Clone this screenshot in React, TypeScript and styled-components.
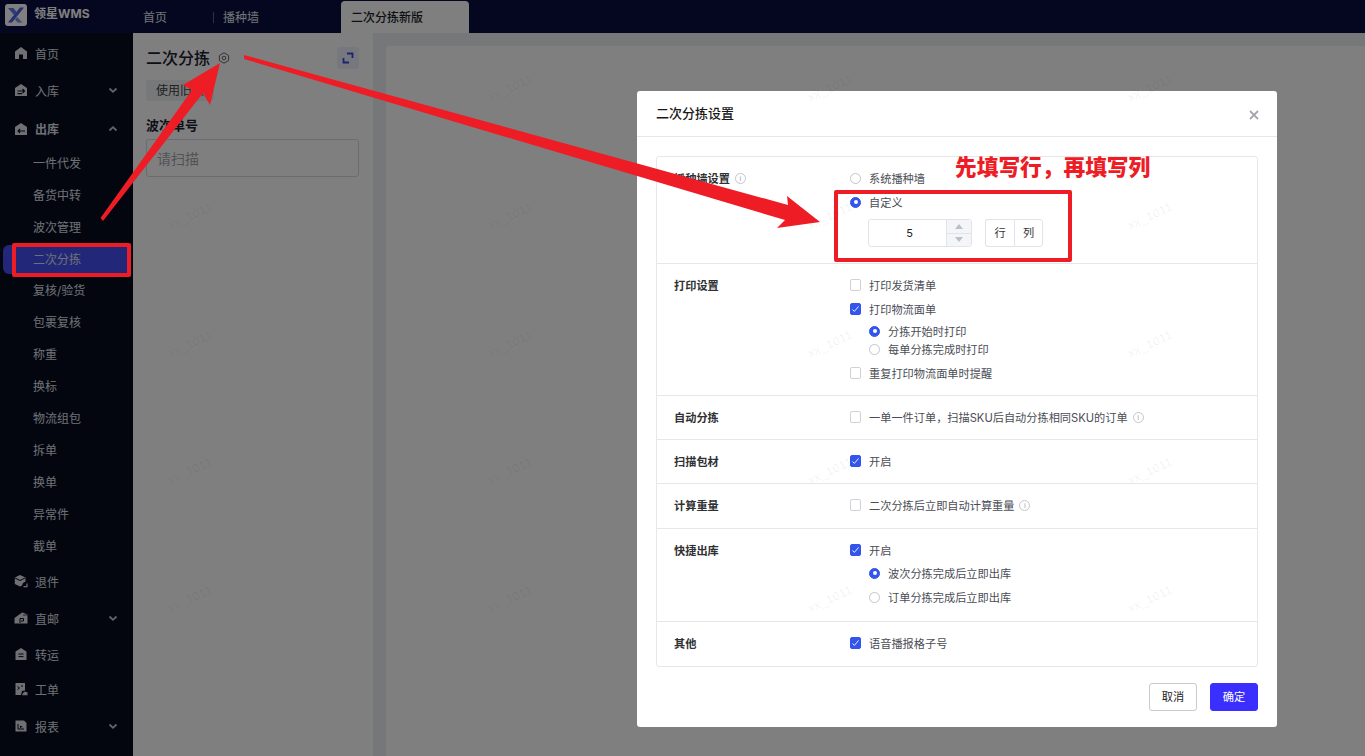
import React from "react";
import styled, { createGlobalStyle } from "styled-components";

const Global = createGlobalStyle`
  html, body { margin: 0; padding: 0; width: 1365px; height: 756px; overflow: hidden; background: #fff; }
  * { box-sizing: border-box; }
  body { font-family: Inter, "Noto Sans CJK SC", "Liberation Sans", sans-serif; font-size: 12px; color: #222; }
`;

const Page = styled.div`
  position: relative;
  width: 1365px;
  height: 756px;
  overflow: hidden;
  display: flex;
  flex-direction: column;
  background: #eceef1;
`;
const Header = styled.header`
  height: 33px;
  flex: none;
  background: #080f3e;
  display: flex;
  align-items: stretch;
`;
const Brand = styled.div`
  width: 133px;
  padding: 4px 0 0 5px;
  display: flex;
  gap: 7px;
  align-items: flex-start;
  color: #fff;
  font-weight: 700;
  font-size: 12px;
  line-height: 19px;
  svg { display: block; flex: none; }
`;
const Tab = styled.div<{ $w: number; $active?: boolean; $sep?: boolean }>`
  position: relative;
  width: ${(p) => p.$w}px;
  margin-top: 1px;
  padding-left: 10px;
  line-height: 33px;
  font-size: 12px;
  font-weight: ${(p) => (p.$active ? 500 : 400)};
  color: ${(p) => (p.$active ? "#1c1f2b" : "#e6e8f0")};
  background: ${(p) => (p.$active ? "#fff" : "transparent")};
  border-radius: ${(p) => (p.$active ? "4px 4px 0 0" : "0")};
  ${(p) =>
    p.$sep &&
    `&::before { content: ""; position: absolute; left: 0; top: 11px; height: 11px; width: 1px; background: #5a6080; }`}
`;
const Body = styled.div`
  flex: 1;
  display: flex;
  min-height: 0;
`;
const Sidebar = styled.nav`
  width: 133px;
  flex: none;
  background: #060a1e;
  padding-top: 2px;
`;
const TopItem = styled.div<{ $h: number; $on?: boolean }>`
  height: ${(p) => p.$h}px;
  padding: 0 15px 0 14px;
  display: flex;
  align-items: center;
  gap: 7px;
  color: #dfe1e8;
  font-weight: ${(p) => (p.$on ? 700 : 400)};
  svg { flex: none; }
`;
const ItemLabel = styled.span`
  flex: 1;
`;
const SubItem = styled.div<{ $active?: boolean }>`
  margin: ${(p) => (p.$active ? "1px 6px 1px 3px" : "0 6px 0 3px")};
  height: ${(p) => (p.$active ? 29 : 32)}px;
  padding-left: 30px;
  line-height: ${(p) => (p.$active ? 30 : 32)}px;
  color: #dfe1e8;
  background: ${(p) => (p.$active ? "#444ef4" : "transparent")};
  border-radius: ${(p) => (p.$active ? "6px 0 0 6px" : "0")};
`;
const LeftPanel = styled.section`
  width: 240px;
  flex: none;
  background: #fff;
  padding: 14px 14px 0 13px;
`;
const TitleRow = styled.div`
  height: 22px;
  display: flex;
  align-items: center;
  gap: 8px;
  svg { display: block; }
`;
const PanelTitle = styled.h2`
  margin: 0;
  font-size: 16px;
  font-weight: 500;
  color: #1d2030;
  line-height: 22px;
`;
const ExpandButton = styled.div`
  width: 22px;
  height: 22px;
  margin-left: auto;
  border-radius: 3px;
  background: #eef0fb;
  display: flex;
  align-items: center;
  justify-content: center;
`;
const OldTag = styled.div`
  margin-top: 11px;
  width: 68px;
  height: 21px;
  border-radius: 3px;
  background: #eef0f4;
  font-size: 12px;
  line-height: 21px;
  padding-left: 10px;
  color: #444;
  overflow: hidden;
  white-space: nowrap;
`;
const FieldLabel = styled.div`
  margin-top: 15px;
  font-size: 13px;
  font-weight: 700;
  line-height: 18px;
  color: #1d2030;
`;
const ScanInput = styled.div`
  margin-top: 5px;
  height: 38px;
  border: 1px solid #d6d9de;
  border-radius: 3px;
  padding-left: 10px;
  line-height: 38px;
  font-size: 14px;
  color: #a4a7ad;
`;
const RightArea = styled.main`
  flex: 1;
  padding: 13px 0 0 13px;
`;
const RightPanel = styled.div`
  height: 100%;
  background: #fff;
  border-radius: 3px 0 0 0;
`;
const Scrim = styled.div`
  position: absolute;
  inset: 0;
  background: rgba(0, 0, 0, 0.5);
  padding: 91px 0 0 637px;
`;
const Modal = styled.div`
  width: 640px;
  height: 636px;
  background: #fff;
  border-radius: 3px;
  display: flex;
  flex-direction: column;
`;
const ModalHead = styled.div`
  height: 46px;
  flex: none;
  border-bottom: 1px solid #e6e7ea;
  padding: 0 18px 3px 19px;
  display: flex;
  align-items: center;
  justify-content: space-between;
`;
const ModalTitle = styled.h3`
  margin: 0;
  font-size: 13px;
  font-weight: 500;
  color: #1a1a1a;
`;
const CloseIcon = styled.svg`
  margin-top: 5px;
`;
const ModalBody = styled.div`
  padding: 19px 19px 0;
`;
const Card = styled.div`
  border: 1px solid #e6e7ea;
  border-radius: 3px;
`;
const Row = styled.div<{ $pb: number }>`
  display: flex;
  padding: 12px 0 ${(p) => p.$pb}px;
  border-bottom: 1px solid #e6e7ea;
  &:last-child { border-bottom: 0; }
`;
const RowLabel = styled.div`
  width: 193px;
  padding-left: 17px;
  flex: none;
  font-weight: 700;
  font-size: 11.2px;
  line-height: 20px;
  color: #303133;
  display: flex;
  align-items: flex-start;
  height: 18px;
`;
const RowBody = styled.div`
  display: flex;
  flex-direction: column;
`;
const Option = styled.div<{ $mt?: number; $indent?: boolean }>`
  display: flex;
  align-items: flex-start;
  height: 18px;
  margin-top: ${(p) => p.$mt ?? 0}px;
  margin-left: ${(p) => (p.$indent ? 19 : 0)}px;
  font-size: 11.2px;
  line-height: 20px;
  color: #4a4d55;
  white-space: nowrap;
`;
const Box = styled.span<{ $on?: boolean }>`
  width: 11px;
  height: 12px;
  flex: none;
  align-self: center;
  margin-right: 8px;
  border-radius: 2px;
  border: 1px solid ${(p) => (p.$on ? "#3355ee" : "#cfd1d6")};
  background: ${(p) => (p.$on ? "#3355ee" : "#fff")};
  display: flex;
  align-items: center;
  justify-content: center;
`;
const Radio = styled.span<{ $on?: boolean }>`
  width: 11px;
  height: 11px;
  flex: none;
  align-self: center;
  margin-right: 8px;
  border-radius: 50%;
  border: 1px solid ${(p) => (p.$on ? "#3355ee" : "#c4c6cc")};
  background: ${(p) => (p.$on ? "#3355ee" : "#fff")};
  display: flex;
  align-items: center;
  justify-content: center;
  &::after {
    content: "";
    width: 4px;
    height: 4px;
    border-radius: 50%;
    background: ${(p) => (p.$on ? "#fff" : "transparent")};
  }
`;
const InfoMark = styled.span`
  width: 11px;
  height: 11px;
  margin-left: 5px;
  flex: none;
  align-self: center;
  border: 1px solid #c4c6cc;
  border-radius: 50%;
  color: #a8abb2;
  font-size: 8px;
  font-weight: 400;
  line-height: 9px;
  text-align: center;
  font-family: "Liberation Sans", sans-serif;
`;
const SizeLine = styled.div`
  margin: 8px 0 0 18px;
  display: flex;
  gap: 13px;
`;
const NumberField = styled.div`
  width: 104px;
  height: 28px;
  border: 1px solid #e2e4e8;
  border-radius: 3px;
  display: flex;
  overflow: hidden;
`;
const NumberValue = styled.div`
  flex: 1;
  padding-left: 4px;
  text-align: center;
  line-height: 26px;
  font-size: 11px;
  color: #222;
`;
const Stepper = styled.div`
  width: 25px;
  border-left: 1px solid #e2e4e8;
  background: #f4f5f8;
  display: flex;
  flex-direction: column;
`;
const Step = styled.div<{ $down?: boolean }>`
  flex: 1;
  display: flex;
  align-items: center;
  justify-content: center;
  border-top: ${(p) => (p.$down ? "1px solid #e2e4e8" : "0")};
  &::after {
    content: "";
    border-left: 4px solid transparent;
    border-right: 4px solid transparent;
    ${(p) => (p.$down ? "border-top: 5px solid #bcbfc6;" : "border-bottom: 5px solid #bcbfc6;")}
  }
`;
const UnitGroup = styled.div`
  display: flex;
`;
const Unit = styled.div`
  width: 29px;
  height: 28px;
  border: 1px solid #e2e4e8;
  line-height: 26px;
  text-align: center;
  font-size: 11.2px;
  color: #333;
  &:first-child { border-radius: 3px 0 0 3px; border-right: 0; }
  &:last-child { border-radius: 0 3px 3px 0; }
`;
const Footer = styled.div`
  margin-top: 16px;
  padding-right: 19px;
  display: flex;
  justify-content: flex-end;
  gap: 13px;
`;
const Button = styled.div<{ $primary?: boolean }>`
  width: 48px;
  height: 28px;
  border-radius: 3px;
  font-size: 11.2px;
  line-height: 26px;
  text-align: center;
  border: 1px solid ${(p) => (p.$primary ? "#3a2fff" : "#c8cad0")};
  background: ${(p) => (p.$primary ? "#3a2fff" : "#fff")};
  color: ${(p) => (p.$primary ? "#fff" : "#222")};
`;
const WatermarkLayer = styled.div`
  position: absolute;
  left: 30px;
  top: 24px;
  display: grid;
  grid-template-columns: repeat(4, 320px);
  grid-auto-rows: 127.8px;
  pointer-events: none;
`;
const Watermark = styled.span`
  display: flex;
  align-items: center;
  justify-content: center;
  font-family: "Liberation Sans", sans-serif;
  font-size: 12px;
  letter-spacing: 0.4px;
  color: rgba(0, 0, 0, 0.07);
  transform: rotate(-25deg);
`;
const Annotations = styled.svg`
  position: absolute;
  inset: 0;
  pointer-events: none;
`;
const Callout = styled.div`
  position: absolute;
  left: 955px;
  top: 152px;
  font-size: 21.7px;
  line-height: 30px;
  font-weight: 900;
  color: #ee1c25;
  white-space: nowrap;
`;
const RedFrame = styled.div<{ $x: number; $y: number; $w: number; $h: number }>`
  position: absolute;
  left: ${(p) => p.$x}px;
  top: ${(p) => p.$y}px;
  width: ${(p) => p.$w}px;
  height: ${(p) => p.$h}px;
  border: 4px solid #ee1c25;
  border-radius: 2px;
`;

const ic = { width: 14, height: 14, viewBox: "0 0 14 14", fill: "#dfe1e8" };
const Home = () => (
  <svg {...ic}>
    <path d="M7 1 13 5.6V13H9V8.6H5V13H1V5.6Z" />
  </svg>
);
const Inbound = () => (
  <svg {...ic}>
    <path d="M7 1 13 5V13H1V5Z" />
    <path d="M3.5 8H10.5M8.5 6 10.5 8 8.5 10M3.5 10.6H8" stroke="#060a1e" strokeWidth="1.1" fill="none" />
  </svg>
);
const Outbound = () => (
  <svg {...ic}>
    <path d="M7 1 13 5V13H1V5Z" />
    <path d="M4 9H11M6 7 4 9 6 11" stroke="#060a1e" strokeWidth="1.1" fill="none" />
  </svg>
);
const Returns = () => (
  <svg {...ic}>
    <path d="M6 1 11.5 3.5V7.5L9 9 8 11.5 6 12.5.8 10V3.5Z" />
    <path d="M1 4 6 6.5 11 4" stroke="#060a1e" fill="none" />
    <path d="M9.5 12.6H13V9.6" stroke="#dfe1e8" strokeWidth="1.2" fill="none" />
  </svg>
);
const Direct = () => (
  <svg {...ic}>
    <path d="M.5 7 8 1.2 13.5 3.5V12.5H.5Z" />
    <path d="M6 12V7.5H9.5V10H7" stroke="#060a1e" fill="none" />
    <path d="M2 5 8.5 1M9 4 13.5 4" stroke="#060a1e" strokeWidth=".7" />
  </svg>
);
const Transit = () => (
  <svg {...ic}>
    <path d="M7 1 12.5 4.5V13H1.5V4.5Z" />
    <path d="M4.5 7H9.5M4.5 9.6H9.5" stroke="#060a1e" fill="none" />
  </svg>
);
const Ticket = () => (
  <svg {...ic}>
    <path d="M1.5 1H11V8.5L8 9 7 13H1.5Z" />
    <path d="M3.5 4.5 5.5 6 3.5 7.5M7 4H9" stroke="#060a1e" fill="none" />
    <path d="M8 13.2H13.5V10.5L11 9.6 9 11Z" />
  </svg>
);
const Report = () => (
  <svg {...ic}>
    <path d="M1.5 1.5H10L12.5 4V12.5H1.5Z" />
    <path d="M4 5V10H10M6.5 9V7.2L8.5 8" stroke="#060a1e" fill="none" />
  </svg>
);
const Chevron = ({ up }: { up?: boolean }) => (
  <svg width="10" height="8" viewBox="0 0 10 8" fill="none">
    <path d={up ? "M1.5 5.5 5 2.2 8.5 5.5" : "M1.5 2.5 5 5.8 8.5 2.5"} stroke="#c8cad2" strokeWidth="1.8" />
  </svg>
);
const Tick = () => (
  <svg width="9" height="8" viewBox="0 0 9 8" fill="none">
    <path d="M1.5 4.5 3.4 6.4 7.6 1.4" stroke="#fff" strokeWidth=".9" />
  </svg>
);

const subs = ["一件代发", "备货中转", "波次管理", "二次分拣", "复核/验货", "包裹复核", "称重", "换标", "物流组包", "拆单", "换单", "异常件", "截单"];

const Check = ({ on, children, mt, info }: { on?: boolean; children: React.ReactNode; mt?: number; info?: boolean }) => (
  <Option $mt={mt}>
    <Box $on={on}>{on && <Tick />}</Box>
    {children}
    {info && <InfoMark>i</InfoMark>}
  </Option>
);
const Choice = ({ on, children, mt, indent }: { on?: boolean; children: React.ReactNode; mt?: number; indent?: boolean }) => (
  <Option $mt={mt} $indent={indent}>
    <Radio $on={on} />
    {children}
  </Option>
);

export default function App() {
  return (
    <Page>
      <Global />
      <Header>
        <Brand>
          <svg width="22" height="22" viewBox="0 0 22 22">
            <rect width="22" height="22" rx="3" fill="#fff" />
            <path d="M19 3.5 7 18.5H3L15 3.5Z" fill="#4c5ce8" />
            <path d="M3 4H8.5L12 8.5 9.5 11.5Z" fill="#5f78f0" />
            <path d="M12 13 17.5 18.5H12.5L10 15.5Z" fill="#7d95f0" />
          </svg>
          领星WMS
        </Brand>
        <Tab $w={80}>首页</Tab>
        <Tab $w={128} $sep>
          播种墙
        </Tab>
        <Tab $w={128} $active>
          二次分拣新版
        </Tab>
      </Header>
      <Body>
        <Sidebar>
          <TopItem $h={36}>
            <Home />
            <ItemLabel>首页</ItemLabel>
          </TopItem>
          <TopItem $h={38}>
            <Inbound />
            <ItemLabel>入库</ItemLabel>
            <Chevron />
          </TopItem>
          <TopItem $h={39} $on>
            <Outbound />
            <ItemLabel>出库</ItemLabel>
            <Chevron up />
          </TopItem>
          {subs.map((s) => (
            <SubItem key={s} $active={s === "二次分拣"}>
              {s}
            </SubItem>
          ))}
          <TopItem $h={36}>
            <Returns />
            <ItemLabel>退件</ItemLabel>
          </TopItem>
          <TopItem $h={38}>
            <Direct />
            <ItemLabel>直邮</ItemLabel>
            <Chevron />
          </TopItem>
          <TopItem $h={34}>
            <Transit />
            <ItemLabel>转运</ItemLabel>
          </TopItem>
          <TopItem $h={36}>
            <Ticket />
            <ItemLabel>工单</ItemLabel>
          </TopItem>
          <TopItem $h={38}>
            <Report />
            <ItemLabel>报表</ItemLabel>
            <Chevron />
          </TopItem>
        </Sidebar>
        <LeftPanel>
          <TitleRow>
            <PanelTitle>二次分拣</PanelTitle>
            <svg width="12" height="12" viewBox="0 0 12 12" fill="none" stroke="#666" strokeWidth="1">
              <path d="M6 .8 10.6 3.4V8.6L6 11.2 1.4 8.6V3.4Z" />
              <circle cx="6" cy="6" r="1.8" />
            </svg>
            <ExpandButton>
              <svg width="12" height="12" viewBox="0 0 12 12" fill="none" stroke="#3a44e8" strokeWidth="1.8">
                <path d="M5 1.5H10.5V6M7 10.5H1.5V6" />
              </svg>
            </ExpandButton>
          </TitleRow>
          <OldTag>使用旧版</OldTag>
          <FieldLabel>波次单号</FieldLabel>
          <ScanInput>请扫描</ScanInput>
        </LeftPanel>
        <RightArea>
          <RightPanel />
        </RightArea>
      </Body>
      <Scrim>
        <Modal>
          <ModalHead>
            <ModalTitle>二次分拣设置</ModalTitle>
            <CloseIcon width="10" height="10" viewBox="0 0 10 10" stroke="#a4a7ad" strokeWidth="1.8">
              <path d="M1 1 9 9M9 1 1 9" />
            </CloseIcon>
          </ModalHead>
          <ModalBody>
            <Card>
              <Row $pb={16}>
                <RowLabel>
                  播种墙设置
                  <InfoMark>i</InfoMark>
                </RowLabel>
                <RowBody>
                  <Choice>系统播种墙</Choice>
                  <Choice on mt={6}>
                    自定义
                  </Choice>
                  <SizeLine>
                    <NumberField>
                      <NumberValue>5</NumberValue>
                      <Stepper>
                        <Step />
                        <Step $down />
                      </Stepper>
                    </NumberField>
                    <UnitGroup>
                      <Unit>行</Unit>
                      <Unit>列</Unit>
                    </UnitGroup>
                  </SizeLine>
                </RowBody>
              </Row>
              <Row $pb={13}>
                <RowLabel>打印设置</RowLabel>
                <RowBody>
                  <Check>打印发货清单</Check>
                  <Check on mt={6}>
                    打印物流面单
                  </Check>
                  <Choice on indent mt={4}>
                    分拣开始时打印
                  </Choice>
                  <Choice indent>每单分拣完成时打印</Choice>
                  <Check mt={6}>重复打印物流面单时提醒</Check>
                </RowBody>
              </Row>
              <Row $pb={13}>
                <RowLabel>自动分拣</RowLabel>
                <RowBody>
                  <Check info>一单一件订单，扫描SKU后自动分拣相同SKU的订单</Check>
                </RowBody>
              </Row>
              <Row $pb={13}>
                <RowLabel>扫描包材</RowLabel>
                <RowBody>
                  <Check on>开启</Check>
                </RowBody>
              </Row>
              <Row $pb={14}>
                <RowLabel>计算重量</RowLabel>
                <RowBody>
                  <Check info>二次分拣后立即自动计算重量</Check>
                </RowBody>
              </Row>
              <Row $pb={15}>
                <RowLabel>快捷出库</RowLabel>
                <RowBody>
                  <Check on>开启</Check>
                  <Choice on indent mt={5}>
                    波次分拣完成后立即出库
                  </Choice>
                  <Choice indent mt={6}>
                    订单分拣完成后立即出库
                  </Choice>
                </RowBody>
              </Row>
              <Row $pb={14}>
                <RowLabel>其他</RowLabel>
                <RowBody>
                  <Check on>语音播报格子号</Check>
                </RowBody>
              </Row>
            </Card>
          </ModalBody>
          <Footer>
            <Button>取消</Button>
            <Button $primary>确定</Button>
          </Footer>
        </Modal>
      </Scrim>
      <WatermarkLayer>
        {Array.from({ length: 20 }, (_, i) => (
          <Watermark key={i}>xx_1011</Watermark>
        ))}
      </WatermarkLayer>
      <RedFrame $x={12} $y={243} $w={119} $h={34} />
      <RedFrame $x={834} $y={190} $w={238} $h={72} />
      <Callout>先填写行，再填写列</Callout>
      <Annotations width="1365" height="756" viewBox="0 0 1365 756" fill="#ee1c25">
        <path d="M100.5 218 192 90 183 85 220 63 210 105 203 93 103 221Z" />
        <path d="M244 55 788 205 787 196 820 222 777 228 785 220 244 59Z" />
      </Annotations>
    </Page>
  );
}
